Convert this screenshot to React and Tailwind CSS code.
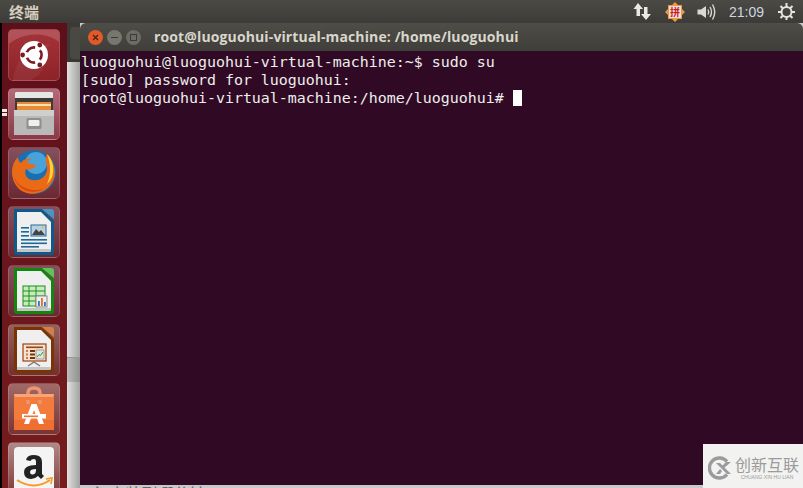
import React from 'react'

const Tile = ({ className = '', children }) => (
  <div className={`w-[52px] h-[52px] shrink-0 rounded-[5px] border border-white/15 overflow-hidden ${className}`}>
    <svg className="w-[50px] h-[50px] block" viewBox="0 0 50 50">{children}</svg>
  </div>
)

const UbuntuIcon = () => (
  <>
    <path d="M0 14 C12 4 34 0 50 12 L50 0 L0 0 Z" fill="#fff" opacity=".16" />
    <path d="M4 50 C6 30 20 14 42 14 C30 20 44 40 22 50 Z" fill="#fff" opacity=".06" />
    <circle cx="25" cy="25" r="14" fill="#fff" />
    <circle cx="25" cy="25" r="7.6" fill="none" stroke="#7b1a20" strokeWidth="2.6" />
    <circle cx="17" cy="25" r="3" fill="#fff" />
    <circle cx="29" cy="18" r="3" fill="#fff" />
    <circle cx="29" cy="32" r="3" fill="#fff" />
    <circle cx="13.6" cy="25" r="2.4" fill="#7b1a20" />
    <circle cx="30.8" cy="15" r="2.4" fill="#7b1a20" />
    <circle cx="30.8" cy="35" r="2.4" fill="#7b1a20" />
  </>
)

const FilesIcon = () => (
  <>
    <path d="M6 4 Q6 3 8 3 H42 Q44 3 44 4 V14 H6 Z" fill="#e6e6e4" />
    <rect x="6" y="9" width="38" height="16" fill="#3d3a38" />
    <rect x="8" y="13" width="34" height="10" fill="#e88a35" />
    <rect x="8" y="15" width="34" height="2" fill="#f8e0b0" />
    <path d="M5 21 H45 V46 H5 Z" fill="#b9b9b7" />
    <path d="M5 21 H45 V27 H5 Z" fill="#cfcfcd" />
    <rect x="17.5" y="29" width="15" height="11" rx="1.5" fill="#8f8f8d" />
    <rect x="19.5" y="31" width="11" height="6" rx="1" fill="#efefed" />
  </>
)

const FirefoxIcon = () => (
  <>
    <circle cx="25" cy="24" r="22" fill="#1b6fb0" />
    <circle cx="27" cy="15" r="11" fill="#4aa3d8" />
    <path d="M38 6 C46 14 49 27 42 36 C36 45 24 48 15 44 C8 41 3 33 3 24 C3 18 5 13 9 9 C9 12 10 14 12 15 C14 11 18 10 23 11 C20 12 18 13 18 15 C21 16 25 16 27 18 C25 21 21 22 17 21 C15 25 17 31 23 32 C32 34 39 27 38 19 C37 13 36 10 38 6 Z" fill="#ea6a16" />
    <path d="M38 6 C46 14 47 29 38 36 C42 27 42 16 38 6 Z" fill="#fbd33c" />
    <path d="M5 29 C8 41 22 48 35 41 C24 44 10 41 5 29 Z" fill="#d8480f" />
  </>
)

const DocShell = ({ dark, light, children }) => (
  <>
    <path d="M5 2 H33 L45 14 V45 Q45 48 42 48 H8 Q5 48 5 45 Z" fill={dark} />
    <path d="M33 2 H42 Q45 2 45 5 V12 Z" fill={light} />
    <path d="M8 5 H32 L42 15 V43 Q42 45 40 45 H8 Z" fill="#efefef" />
    <path d="M8 42 H42 V43 Q42 45 40 45 H8 Z" fill="#c4c4c4" />
    {children}
  </>
)

const WriterIcon = () => (
  <DocShell dark="#0f5a8c" light="#4a94c4">
    <rect x="12" y="20" width="8" height="1.6" fill="#1b6a9c" />
    <rect x="12" y="24" width="8" height="1.6" fill="#1b6a9c" />
    <rect x="12" y="28" width="8" height="1.6" fill="#1b6a9c" />
    <rect x="12" y="32" width="26" height="1.6" fill="#1b6a9c" />
    <rect x="12" y="35.5" width="26" height="1.6" fill="#1b6a9c" />
    <rect x="12" y="39" width="18" height="1.6" fill="#1b6a9c" />
    <rect x="22" y="18" width="15" height="11" fill="#b8d2e4" stroke="#2a6e9a" />
    <path d="M23 28 L27 22 L30 25 L32 23 L36 28 Z" fill="#444" />
    <circle cx="34" cy="20.5" r="1.2" fill="#e8c040" />
  </DocShell>
)

const CalcIcon = () => (
  <DocShell dark="#14860f" light="#5cc558">
    <rect x="14" y="20" width="22" height="20" fill="#c8ecc0" stroke="#1f8f1a" />
    <path d="M14 25 H36 M14 30 H36 M14 35 H36 M20 20 V40 M27 20 V40" stroke="#1f8f1a" strokeWidth="1" />
    <rect x="27" y="30" width="11" height="11" fill="#eee" stroke="#888" />
    <rect x="29" y="35" width="1.8" height="5" fill="#2a78c0" />
    <rect x="32" y="32" width="1.8" height="8" fill="#e2701c" />
    <rect x="35" y="36" width="1.8" height="4" fill="#2a78c0" />
  </DocShell>
)

const ImpressIcon = () => (
  <DocShell dark="#7a3404" light="#d0814a">
    <rect x="14" y="19" width="23" height="17" fill="#f4e2d4" stroke="#9c4310" strokeWidth="1.2" />
    <rect x="17" y="21.5" width="17" height="1.6" fill="#9c4310" />
    <rect x="17" y="25" width="2" height="2" fill="#d47a3c" />
    <rect x="17" y="28.5" width="2" height="2" fill="#d47a3c" />
    <rect x="17" y="32" width="2" height="2" fill="#d47a3c" />
    <rect x="21" y="25" width="5" height="2" fill="#7a3404" />
    <rect x="21" y="28.5" width="5" height="2" fill="#7a3404" />
    <rect x="21" y="32" width="5" height="2" fill="#7a3404" />
    <rect x="27" y="25" width="8" height="9" fill="#dfe5df" stroke="#777" strokeWidth=".6" />
    <path d="M28 32 L30 29.5 L31.5 30.5 L34 27" stroke="#2aa02a" fill="none" />
    <path d="M19 41 L25 37 L31 41" stroke="#777" strokeWidth="1.4" fill="none" />
  </DocShell>
)

const StoreIcon = () => (
  <>
    <path d="M19 16 V9 Q19 4 25 4 Q31 4 31 9 V16" fill="none" stroke="#ee9470" strokeWidth="3.5" />
    <path d="M5 10 H45 V46 H5 Z" fill="#f37c3c" />
    <path d="M5 10 H45 L44 13 H6 Z" fill="#f7a47c" />
    <path d="M5 36 H45 V46 H5 Z" fill="#ee6f30" />
    <path d="M19 16 V20 M31 16 V20" stroke="#ee9470" strokeWidth="3.5" />
    <path d="M22.5 20 H27.5 L35 40 H30 L25 26 L20 40 H15 Z" fill="#fff" />
    <rect x="13" y="30" width="24" height="4.5" fill="#fff" />
    <rect x="15" y="31.5" width="14" height="1.6" fill="#ef7434" />
  </>
)

const AmazonIcon = () => (
  <>
    <rect x="5" y="4" width="40" height="46" rx="4" fill="#f4f4f4" />
    <path d="M17 17 Q18 12 25 12 Q33 12 33 19 V31 L35 33 L32 36 L29 33 Q26 36 22 36 Q15 36 15 29 Q15 22 27 22 V19 Q27 16 25 16 Q22 16 21.5 18 Z M27 26 Q21 26 21 29 Q21 32 24 31.5 Q27 31 27 27 Z" fill="#222" fillRule="evenodd" />
    <path d="M8 37 Q25 48 41 37" fill="none" stroke="#f79a1e" strokeWidth="2" />
    <path d="M37 36 L43 35 L42 41" fill="none" stroke="#f79a1e" strokeWidth="1.6" />
  </>
)

const Launcher = () => (
  <div className="w-[67px] shrink-0 h-full border-l-2 border-black bg-gradient-to-b from-[#5d0f1a] to-[#761c1e] pl-[6px] pt-[6px] flex flex-col gap-[7px] overflow-hidden relative">
    <Tile className="bg-gradient-to-b from-[#a4343a] to-[#8c2328]"><UbuntuIcon /></Tile>
    <Tile className="bg-gradient-to-b from-[#b56a78] to-[#8a3a46]"><FilesIcon /></Tile>
    <Tile className="bg-gradient-to-b from-[#85505c] to-[#6b2833]"><FirefoxIcon /></Tile>
    <Tile className="bg-gradient-to-b from-[#85505c] to-[#6b2833]"><WriterIcon /></Tile>
    <Tile className="bg-gradient-to-b from-[#85505c] to-[#6b2833]"><CalcIcon /></Tile>
    <Tile className="bg-gradient-to-b from-[#95605c] to-[#73302f]"><ImpressIcon /></Tile>
    <Tile className="bg-gradient-to-b from-[#a06a68] to-[#783432]"><StoreIcon /></Tile>
    <Tile className="bg-gradient-to-b from-[#b08a88] to-[#803c3c]"><AmazonIcon /></Tile>
    {/* running app pips */}
    <div className="absolute left-0 top-[86px] flex flex-col gap-[1px]">
      <div className="w-[5px] h-[3px] bg-white/90" />
      <div className="w-[5px] h-[3px] bg-white/90" />
    </div>
  </div>
)

const Indicators = () => (
  <div className="flex items-center text-[#d8d8d4]">
    <svg className="w-[19px] h-[19px] mr-[13px]" viewBox="0 0 19 19" fill="#e8e8e4">
      <path d="M5 1 L10 7 H7 V14 H3.5 V7 H0.5 Z" />
      <path d="M11 5 H14.5 V12 H18 L13 18 L8 12 H11 Z" />
    </svg>
    <div className="relative w-[20px] h-[20px] mr-[12px]">
      <svg className="w-[20px] h-[20px]" viewBox="0 0 20 20">
        <path d="M10 0 L13 3 L17 3 L17 7 L20 10 L17 13 L17 17 L13 17 L10 20 L7 17 L3 17 L3 13 L0 10 L3 7 L3 3 L7 3 Z" fill="#eb9a3c" />
        <rect x="4" y="4" width="12" height="12" rx="1" fill="#f3e2dc" />
      </svg>
      <span className="absolute inset-0 flex items-center justify-center text-[10px] leading-none font-bold text-[#c8202a] font-['Noto_Sans_CJK_SC',sans-serif]">拼</span>
    </div>
    <svg className="w-[20px] h-[18px] mr-[12px]" viewBox="0 0 20 18" fill="none" stroke="#d8d8d4" strokeWidth="1.4">
      <path d="M0.5 6.5 H4 L9 3 V15 L4 11.5 H0.5 Z" fill="#d8d8d4" stroke="none" />
      <path d="M11 6.5 Q12.5 9 11 11.5" />
      <path d="M13 4 Q16 9 13 14" />
      <path d="M15.5 1.5 Q20 9 15.5 16.5" />
    </svg>
    <span className="w-[36px] mr-[13px] text-[14px] leading-none font-['Liberation_Sans',sans-serif] text-[#cfd6e0]">21:09</span>
    <svg className="w-[17px] h-[17px] mr-[8px]" viewBox="0 0 17 17" fill="none" stroke="#e4e4e0">
      <circle cx="8.5" cy="9" r="5" strokeWidth="2" />
      <path d="M8.5 0 V4 M8.5 14 V17 M0 9 H3.5 M13.5 9 H17 M2.5 3 L5 5.5 M14.5 3 L12 5.5 M2.5 15 L5 12.5 M14.5 15 L12 12.5" strokeWidth="2" />
    </svg>
  </div>
)

const TopBar = () => (
  <div className="h-[23px] shrink-0 flex items-center justify-between bg-gradient-to-b from-[#4b4a45] to-[#3c3b37] pl-[9px]">
    <span className="text-[15px] font-bold leading-none text-[#d6cdbf] font-['Noto_Sans_CJK_SC','Liberation_Sans',sans-serif]">终端</span>
    <Indicators />
  </div>
)

const WinButton = ({ className, children }) => (
  <div className={`w-[15px] h-[15px] rounded-full flex items-center justify-center ${className}`}>{children}</div>
)

const Terminal = () => (
  <div className="flex-1 min-h-0 flex flex-col overflow-hidden rounded-t-[6px]">
    <div className="h-[28px] shrink-0 flex items-center bg-gradient-to-b from-[#4e4d47] to-[#3f3e3a] pl-[8px]">
      <div className="flex items-center gap-[4px] w-[66px]">
        <WinButton className="bg-[#e2592a]">
          <svg className="w-[7px] h-[7px]" viewBox="0 0 7 7"><path d="M1 1 L6 6 M6 1 L1 6" stroke="#4a2010" strokeWidth="1.2" /></svg>
        </WinButton>
        <WinButton className="bg-[#77766f]"><div className="w-[7px] h-[1px] bg-[#3a3a36]" /></WinButton>
        <WinButton className="bg-[#6c6b64]"><div className="w-[7px] h-[7px] border border-[#3a3a36]" /></WinButton>
      </div>
      <span className="text-[14px] font-bold leading-none tracking-[0.13px] text-[#d9d6cc] font-['Open_Sans',sans-serif]">root@luoguohui-virtual-machine: /home/luoguohui</span>
    </div>
    <div className="flex-1 bg-[#300a24] pl-[1px] pt-[2px] text-[14.95px] leading-[18px] text-[#eeeeec] font-['DejaVu_Sans_Mono',monospace] whitespace-pre">
      <div>luoguohui@luoguohui-virtual-machine:~$ sudo su</div>
      <div>[sudo] password for luoguohui:</div>
      <div className="flex">
        <span>root@luoguohui-virtual-machine:/home/luoguohui# </span>
        <span className="w-[9px] h-[16px] mt-[1px] bg-white" />
      </div>
    </div>
  </div>
)

const BackWindowEdge = () => (
  <div className="w-[13px] shrink-0 flex flex-col">
    <div className="h-[39px] bg-[#3a3935] pl-[3px] pt-[4px] pb-[3px]">
      <div className="h-full bg-[#494843] rounded-l-[4px]" />
    </div>
    <div className="h-[295px] bg-gradient-to-r from-[#e2e2e0] to-[#a2a2a0]" />
    <div className="h-[25px] bg-gradient-to-r from-[#bdbdbb] to-[#8f8f8d] border-t border-[#999]" />
    <div className="flex-1 bg-gradient-to-r from-[#e2e2e0] to-[#a2a2a0]" />
  </div>
)

const Watermark = () => (
  <div className="absolute right-0 bottom-0 w-[100px] h-[44px] bg-[#f2f2f0] flex items-center pl-[5px] pt-[4px] gap-[3px]">
    <svg className="w-[24px] h-[24px] shrink-0" viewBox="0 0 24 24" fill="none">
      <path d="M19 5.5 A10 10 0 1 0 19 18.5" stroke="#999b9c" strokeWidth="3.4" />
      <path d="M8 7 L19 18 H23 L12 7 Z M23 6 H18 L14 10 L16 12 Z M8 18 H12 L14 15 L12 13 Z" fill="#999b9c" />
    </svg>
    <div className="flex flex-col items-center gap-[2px] font-['Noto_Sans_CJK_SC',sans-serif] text-[#999b9c]">
      <span className="text-[16px] leading-[16px]">创新互联</span>
      <span className="text-[5px] leading-[6px] font-['Liberation_Sans',sans-serif] whitespace-nowrap">CHUANG XIN HU LIAN</span>
    </div>
  </div>
)

const App = () => (
  <div className="relative w-[803px] h-[488px] overflow-hidden flex flex-col bg-[#c9c9c7]">
    <TopBar />
    <div className="flex-1 min-h-0 flex">
      <Launcher />
      <BackWindowEdge />
      <div className="flex-1 min-w-0 flex flex-col">
        <Terminal />
        <div className="h-[3px] shrink-0 overflow-hidden pl-[10px] text-[16px] leading-[16px] text-[#666] bg-[#c9c9c7] font-['Noto_Sans_CJK_SC',sans-serif]">主 安装到哪分钟</div>
      </div>
    </div>
    <Watermark />
  </div>
)

export default App
